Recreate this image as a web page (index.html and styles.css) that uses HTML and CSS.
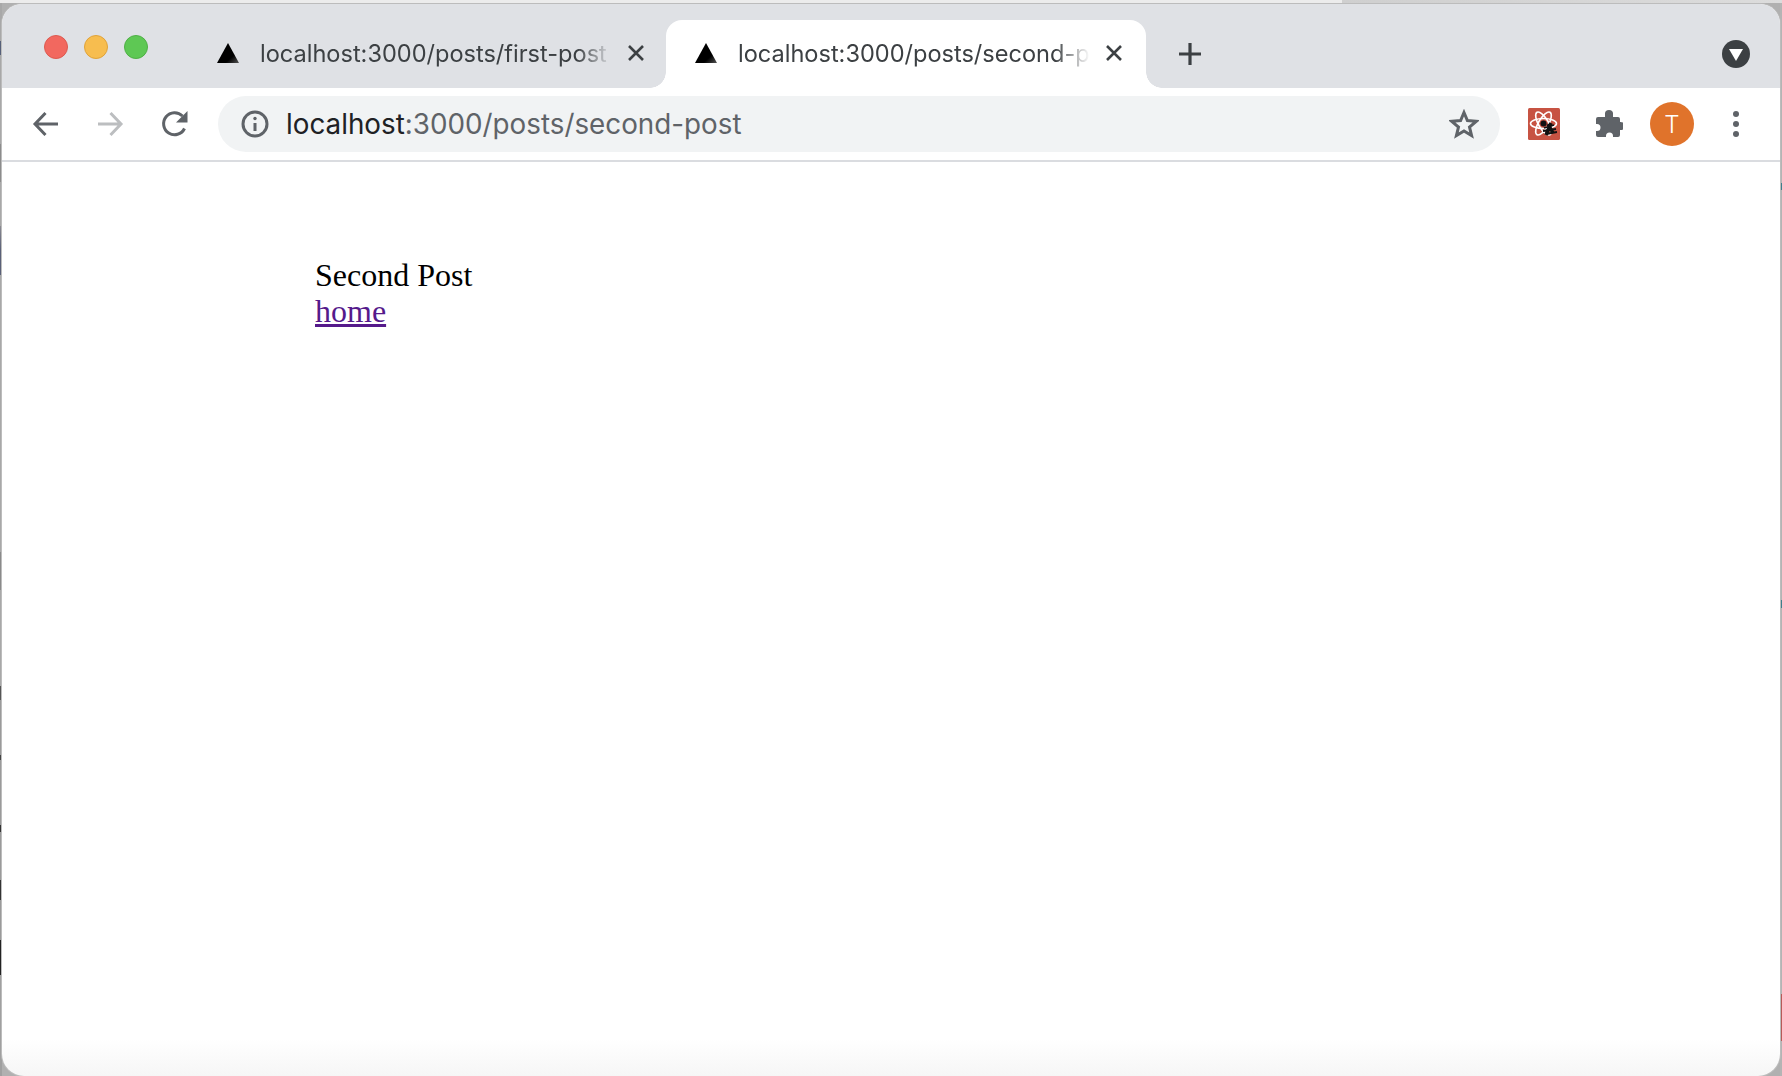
FILE: index.html
```html
<!DOCTYPE html>
<html lang="en">
<head>
<meta charset="utf-8">
<title>Second Post</title>
<link rel="stylesheet" href="styles.css">
</head>
<body>
<div class="window">
  <header class="tabstrip">
    <div class="lights">
      <span class="light light-red"></span>
      <span class="light light-yellow"></span>
      <span class="light light-green"></span>
    </div>
    <div class="tab tab-inactive">
      <svg class="favicon" viewBox="0 0 22 20"><defs><linearGradient id="fa" x1="0.3" y1="0.3" x2="1" y2="1"><stop offset="0.55" stop-color="#000"/><stop offset="1" stop-color="#555"/></linearGradient></defs><path d="M11 0L22 20H0Z" fill="url(#fa)"/></svg>
      <span class="tab-title">localhost:3000/posts/first-post</span>
      <svg class="tab-close" viewBox="0 0 18 18"><path d="M2 2L16 16M16 2L2 16"/></svg>
    </div>
    <div class="tab tab-active">
      <svg class="favicon" viewBox="0 0 22 20"><defs><linearGradient id="fb" x1="0.3" y1="0.3" x2="1" y2="1"><stop offset="0.55" stop-color="#000"/><stop offset="1" stop-color="#555"/></linearGradient></defs><path d="M11 0L22 20H0Z" fill="url(#fb)"/></svg>
      <span class="tab-title">localhost:3000/posts/second-post</span>
      <svg class="tab-close" viewBox="0 0 18 18"><path d="M2 2L16 16M16 2L2 16"/></svg>
    </div>
    <svg class="newtab" viewBox="0 0 24 24"><path d="M12 1V23M1 12H23"/></svg>
    <div class="tabstrip-end">
      <span class="tabsearch"><svg viewBox="0 0 14 12"><path d="M0 0H14L7 12Z"/></svg></span>
    </div>
  </header>
  <nav class="toolbar">
    <svg class="nav-icon" viewBox="0 0 28 28"><path d="M26 14H3M13.5 3L3 14L13.5 25"/></svg>
    <svg class="nav-icon nav-disabled" viewBox="0 0 28 28"><path d="M2 14H25M14.5 3L25 14L14.5 25"/></svg>
    <svg class="nav-icon nav-reload" viewBox="0 0 28 28"><path class="arc" d="M23.5 18.5A11 11 0 1 1 21.5 6"/><path class="head" d="M26.5 1V12.5H15Z"/></svg>
    <div class="omnibox">
      <svg class="info" viewBox="0 0 28 28"><circle cx="14" cy="14" r="12"/><path class="info-line" d="M14 13V21"/><circle class="info-dot" cx="14" cy="8.5" r="1.7"/></svg>
      <span class="url"><span class="url-host">localhost</span>:3000/posts/second-post</span>
      <svg class="star" viewBox="0 0 30 30"><path d="M15 3.5L18.4 11.6L27.2 12.3L20.5 18L22.6 26.6L15 22L7.4 26.6L9.5 18L2.8 12.3L11.6 11.6Z"/></svg>
    </div>
    <svg class="ext" viewBox="0 0 32 32">
      <rect width="32" height="32" rx="1.5" fill="#c75343"/>
      <g fill="none" stroke="#fff" stroke-width="1.6">
        <ellipse cx="15.5" cy="15.5" rx="13" ry="5"/>
        <ellipse cx="15.5" cy="15.5" rx="13" ry="5" transform="rotate(60 15.5 15.5)"/>
        <ellipse cx="15.5" cy="15.5" rx="13" ry="5" transform="rotate(120 15.5 15.5)"/>
      </g>
      <circle cx="15.5" cy="15.5" r="3" fill="#111"/>
      <g stroke="#111" stroke-width="1.8">
        <path d="M20 16L25 25M23 15L18 27" stroke-width="3.5"/>
        <path d="M16 20L26 17M15 23L28 21M18 26L29 24"/>
      </g>
    </svg>
    <svg class="puzzle" viewBox="0 0 28 28"><path d="M10 3.5A4 3.5 0 0 1 18 3.5V7H23A2 2 0 0 1 25 9V12H25.5A4 4 0 0 1 25.5 20H25V25A2 2 0 0 1 23 27H18V26A3.5 3.5 0 0 0 11 26V27H3A2 2 0 0 1 1 25V21H2A3.5 3.5 0 0 0 2 14H1V9A2 2 0 0 1 3 7H10Z"/></svg>
    <span class="avatar">T</span>
    <span class="menu"><i></i><i></i><i></i></span>
  </nav>
  <main class="page">
    <div class="post-title">Second Post</div>
    <a class="home-link" href="#home">home</a>
  </main>
</div>
</body>
</html>
```
FILE: styles.css
```css
html, body {
  margin: 0;
  height: 100%;
  overflow: hidden;
}
body {
  background-color: #b0b0b0;
  background-repeat: no-repeat;
  background-image:
    linear-gradient(90deg, #ececec 0, #ececec 1342px, #cfcfcf 1342px, #dcdcdc 100%),
    linear-gradient(#a8a8a8 41px, #56607a 41px, #56607a 55px, #a8a8a8 55px, #a8a8a8 144px, #8c8c8c 144px, #8c8c8c 182px, #a8a8a8 182px, #a8a8a8 226px, #8a8a92 226px, #5a6078 250px, #5a6078 275px, #a8a8a8 275px, #a8a8a8 552px, #8a8a8a 552px, #8a8a8a 590px, #a8a8a8 590px, #a8a8a8 686px, #555 686px, #555 700px, #9a9a9a 700px, #9a9a9a 755px, #444 755px, #444 760px, #9a9a9a 760px, #9a9a9a 825px, #333 825px, #333 832px, #9a9a9a 832px, #9a9a9a 880px, #333 880px, #333 900px, #9a9a9a 900px, #9a9a9a 940px, #222 940px, #222 975px, #a0a0a0 975px),
    linear-gradient(#b4b4b4 183px, #3f7f8c 183px, #3f7f8c 190px, #b4b4b4 190px, #b4b4b4 600px, #3f7f8c 600px, #3f7f8c 608px, #b4b4b4 608px, #b4b4b4 994px, #b85a58 994px, #b85a58 1041px, #b4b4b4 1041px);
  background-size: 100% 3px, 2px 100%, 2px 100%;
  background-position: 0 0, 0 0, 100% 0;
}
.window {
  box-sizing: border-box;
  height: 1072px;
  margin: 4px 2px 0 2px;
  box-shadow: 0 0 0 1px #bcbcbc;
  border-radius: 20px 20px 22px 22px;
  overflow: hidden;
  display: flex;
  flex-direction: column;
  background: linear-gradient(#fff 96.5%, #f6f6f6);
  font-family: Inter, Roboto, "Liberation Sans", sans-serif;
}
.tabstrip {
  height: 84px;
  flex: none;
  display: flex;
  background: #dfe1e5;
  box-sizing: border-box;
  padding-top: 16px;
}
.lights {
  display: flex;
  gap: 16px;
  padding: 15px 0 0 42px;
  width: 144px;
  box-sizing: content-box;
  flex: none;
}
.light {
  width: 24px;
  height: 24px;
  border-radius: 50%;
  box-sizing: border-box;
}
.light-red { background: #f2685f; border: 1px solid #dd5a50; }
.light-yellow { background: #f7bd4f; border: 1px solid #e0a33a; }
.light-green { background: #5ec854; border: 1px solid #4fb046; }
.tab {
  height: 68px;
  width: 480px;
  flex: none;
  box-sizing: border-box;
  display: flex;
  align-items: center;
  padding: 0 23px 0 29px;
  color: #3c4043;
  font-size: 23.55px;
}
.tab-inactive {
  width: 478px;
  padding: 0 21px 0 29px;
}
.tab-active {
  position: relative;
  background: #fff;
  border-radius: 16px 16px 0 0;
  margin-right: 32px;
}
.tab-active::before,
.tab-active::after {
  content: "";
  position: absolute;
  bottom: 0;
  width: 16px;
  height: 16px;
}
.tab-active::before {
  left: -16px;
  background: radial-gradient(circle at 0 0, transparent 15.5px, #fff 16px);
}
.tab-active::after {
  right: -16px;
  background: radial-gradient(circle at 100% 0, transparent 15.5px, #fff 16px);
}
.favicon {
  width: 22px;
  height: 20px;
  flex: none;
  margin-right: 21px;
  margin-bottom: 2px;
}
.tab-title {
  flex: 1;
  min-width: 0;
  white-space: nowrap;
  overflow: hidden;
  margin-bottom: 1px;
  -webkit-mask-image: linear-gradient(90deg, #000 90%, transparent 100%);
  mask-image: linear-gradient(90deg, #000 90%, transparent 100%);
}
.tab-close {
  width: 18px;
  height: 18px;
  flex: none;
  margin-left: 15px;
  margin-bottom: 2px;
  fill: none;
  stroke: #3c4043;
  stroke-width: 2.6;
}
.newtab {
  width: 24px;
  height: 24px;
  flex: none;
  margin-top: 22px;
  fill: none;
  stroke: #3c4043;
  stroke-width: 3.2;
}
.tabstrip-end {
  flex: 1;
  display: flex;
  justify-content: flex-end;
  padding: 20px 30px 0 0;
}
.tabsearch {
  width: 28px;
  height: 28px;
  border-radius: 50%;
  background: #3c4043;
  display: flex;
  align-items: center;
  justify-content: center;
}
.tabsearch svg {
  width: 14px;
  height: 12px;
  fill: #fff;
  margin-top: 2px;
}
.toolbar {
  height: 72px;
  flex: none;
  box-sizing: border-box;
  display: flex;
  align-items: center;
  background: #fff;
  padding: 0 0 0 30px;
}
.nav-icon {
  width: 28px;
  height: 28px;
  flex: none;
  fill: none;
  stroke: #5f6368;
  stroke-width: 3;
  margin-right: 36px;
}
.nav-disabled {
  stroke: #bcbec0;
  margin-right: 37px;
}
.nav-reload {
  margin-right: 29px;
}
.nav-reload .head {
  fill: #5f6368;
  stroke: none;
}
.omnibox {
  width: 1282px;
  height: 56px;
  flex: none;
  box-sizing: border-box;
  border-radius: 28px;
  background: #f1f3f4;
  display: flex;
  align-items: center;
  padding: 0 21px 0 23px;
  margin-right: 28px;
}
.info {
  width: 28px;
  height: 28px;
  flex: none;
  fill: none;
  stroke: #5f6368;
  stroke-width: 3;
  margin-right: 17px;
}
.info-dot {
  fill: #5f6368;
  stroke: none;
}
.url {
  flex: 1;
  font-size: 27.8px;
  color: #5f6368;
  white-space: nowrap;
}
.url-host {
  color: #202124;
}
.star {
  width: 30px;
  height: 30px;
  flex: none;
  fill: none;
  stroke: #5f6368;
  stroke-width: 3;
}
.ext {
  width: 32px;
  height: 32px;
  flex: none;
  margin-right: 35px;
}
.puzzle {
  width: 28px;
  height: 28px;
  flex: none;
  fill: #5f6368;
  margin-right: 27px;
}
.avatar {
  width: 44px;
  height: 44px;
  flex: none;
  border-radius: 50%;
  background: #e0732b;
  color: #fff;
  font-size: 24px;
  font-weight: 300;
  display: flex;
  align-items: center;
  justify-content: center;
  margin-right: 31px;
}
.menu {
  width: 22px;
  flex: none;
  display: flex;
  flex-direction: column;
  align-items: center;
  gap: 4px;
}
.menu i {
  width: 6px;
  height: 6px;
  border-radius: 50%;
  background: #5f6368;
}
.page {
  flex: 1;
  border-top: 2px solid #dadce0;
  padding: 95px 0 0 313px;
  font-family: "Liberation Serif", serif;
  font-size: 32px;
  line-height: 36px;
  color: #000;
}
.home-link {
  color: #551a8b;
}
```
